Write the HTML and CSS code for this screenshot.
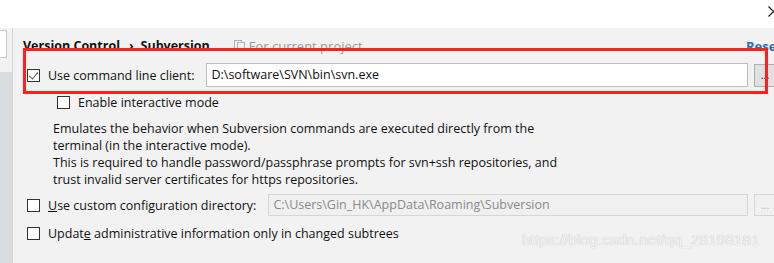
FILE: index.html
```html
<!DOCTYPE html>
<html lang="en">
<head>
    <meta charset="UTF-8">
    <title>Subversion settings</title>
    <link rel="stylesheet" href="styles.css">
</head>
<body>

    <div class="titlebar">
        <svg class="close" width="11" height="11" viewBox="0 0 11 11">
            <path d="M0.5 0.5 L10.5 10.5 M10.5 0.5 L0.5 10.5" stroke="#111" stroke-width="1.2" fill="none"/>
        </svg>
    </div>

    <div class="dialog">
        <aside class="sidebar">
            <div class="search"></div>
            <div class="tree"></div>
        </aside>

        <main class="panel">
            <div class="crumbs">
                <span class="crumb">Version Control</span>
                <span class="sep">›</span>
                <span class="crumb">Subversion</span>
                <span class="scope">
                    <svg width="11" height="11" viewBox="0 0 11 11">
                        <rect x="0.5" y="0.5" width="7" height="8" fill="none" stroke="#a8b0b8"/>
                        <rect x="3.5" y="2.5" width="7" height="8" fill="#f2f2f2" stroke="#a8b0b8"/>
                    </svg>
                    For current project
                </span>
                <a class="reset">Reset</a>
            </div>

            <div class="row">
                <label class="check"><span class="box checked"></span>Use command line client:</label>
                <div class="field">D:\software\SVN\bin\svn.exe</div>
                <button class="browse">...</button>
            </div>

            <div class="row sub">
                <label class="check"><span class="box"></span>Enable interactive mode</label>
            </div>

            <p class="hint">
                Emulates the behavior when Subversion commands are executed directly from the<br>
                terminal (in the interactive mode).<br>
                This is required to handle password/passphrase prompts for svn+ssh repositories, and<br>
                trust invalid server certificates for https repositories.
            </p>

            <div class="row config">
                <label class="check"><span class="box"></span><span><u>U</u>se custom configuration directory:</span></label>
                <div class="field disabled">C:\Users\Gin_HK\AppData\Roaming\Subversion</div>
                <button class="browse disabled">...</button>
            </div>

            <div class="row update">
                <label class="check"><span class="box"></span><span>Updat<u>e</u> administrative information only in changed subtrees</span></label>
            </div>

            <div class="mark">https://blog.csdn.net/qq_28198181</div>
            <div class="highlight"></div>
        </main>
    </div>

</body>
</html>
```

FILE: styles.css
```css
html, body {
    margin: 0;
    height: 100%;
    overflow: hidden;
}
body {
    font-family: "Open Sans", "Noto Sans", sans-serif;
    font-size: 12.5px;
    color: #111;
    background: #f2f2f2;
}
.titlebar {
    height: 28px;
    background: #fff;
    display: flex;
    justify-content: flex-end;
}
.close {
    margin-top: 6px;
    margin-right: -5px;
}
.dialog {
    display: flex;
    height: 235px;
}
/* left settings tree, mostly hidden */
.sidebar {
    width: 12px;
    flex: none;
    display: flex;
    flex-direction: column;
    border-right: 1px solid #d4d6d8;
}
.search {
    height: 26px;
    margin-top: 2px;
    margin-right: 5px;
    background: #fff;
    border: 1px solid #c9c9c9;
    border-left: none;
}
.tree {
    flex: 1;
    margin-top: 14px;
    background: #d9dcdf;
}
.panel {
    position: relative;
    width: 753px;
    flex: none;
    padding: 8px 14px 0 10px;
}
.crumbs {
    display: flex;
    align-items: center;
    height: 19px;
    font-size: 12.5px;
}
.crumb {
    font-weight: bold;
}
.sep {
    margin: 0 7px 0 9px;
    font-weight: bold;
}
.scope {
    display: flex;
    align-items: center;
    gap: 4px;
    margin-left: 24px;
    color: #9a9a9a;
    font-size: 13px;
}
.reset {
    margin-left: auto;
    margin-right: -6px;
    color: #2a6ebd;
    font-weight: bold;
    font-size: 13px;
}
.row {
    display: flex;
    align-items: center;
    gap: 12px;
    height: 24px;
    margin-top: 8px;
    padding-left: 4px;
}
.check {
    display: flex;
    align-items: center;
    gap: 8px;
    white-space: nowrap;
}
.box {
    width: 11px;
    height: 11px;
    border: 1px solid #333;
    background: #fff;
    position: relative;
}
.box.checked::after {
    content: "";
    position: absolute;
    left: 3px;
    top: 0px;
    width: 4px;
    height: 8px;
    border: solid #555;
    border-width: 0 1.5px 1.5px 0;
    transform: rotate(40deg);
}
.field {
    flex: 1;
    height: 22px;
    line-height: 22px;
    padding-left: 4px;
    background: #fff;
    border: 1px solid #bdbdbd;
    white-space: nowrap;
    overflow: hidden;
}
.browse {
    width: 22px;
    height: 23px;
    padding: 0;
    margin-left: -6px;
    border: 1px solid #adadad;
    background: #e1e1e1;
    font-family: inherit;
    font-size: 11px;
    color: #222;
    line-height: 14px;
}
.sub {
    height: 16px;
    margin-top: 7px;
    padding-left: 34px;
}
.hint {
    margin: 10px 0 0 30px;
    line-height: 17px;
}
.config {
    height: 22px;
    margin-top: 6px;
}
.field.disabled {
    height: 20px;
    line-height: 20px;
    background: #f0f0f0;
    border-color: #d6d6d6;
    color: #8a8a8a;
}
.browse.disabled {
    height: 22px;
    border-color: #d6d6d6;
    background: #f0f0f0;
    color: #b8b8b8;
}
.update {
    height: 16px;
    margin-top: 9px;
}
/* csdn watermark over the dialog */
.mark {
    position: absolute;
    left: 509px;
    top: 203px;
    font-family: "Liberation Sans", Arial, sans-serif;
    font-size: 15.5px;
    color: rgba(255, 255, 255, 0.85);
    text-shadow: 0 0 1px rgba(0, 0, 0, 0.3);
}
/* red annotation frame */
.highlight {
    position: absolute;
    left: 10px;
    top: 20px;
    width: 739px;
    height: 40px;
    border: 3px solid #fe1f1f;
}
```
